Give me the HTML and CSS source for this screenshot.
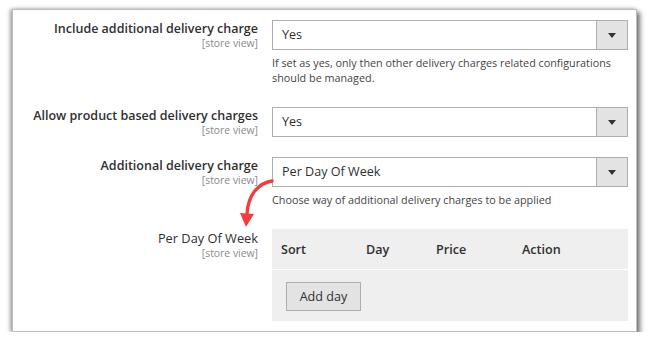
FILE: index.html
```html
<!DOCTYPE html>
<html lang="en">
<head>
    <meta charset="UTF-8">
    <title>Delivery Charges</title>
    <link rel="stylesheet" href="styles.css">
</head>
<body>
    <div class="card">
        <!-- Include additional delivery charge -->
        <div class="field">
            <div class="label">
                <span class="label-text">Include additional delivery charge</span>
                <span class="scope">[store view]</span>
            </div>
            <div class="control">
                <div class="select">
                    <span class="select-value">Yes</span>
                    <span class="select-btn"><i class="caret"></i></span>
                </div>
                <p class="note">If set as yes, only then other delivery charges related configurations should be managed.</p>
            </div>
        </div>

        <!-- Allow product based delivery charges -->
        <div class="field field-2">
            <div class="label">
                <span class="label-text">Allow product based delivery charges</span>
                <span class="scope">[store view]</span>
            </div>
            <div class="control">
                <div class="select">
                    <span class="select-value">Yes</span>
                    <span class="select-btn"><i class="caret"></i></span>
                </div>
            </div>
        </div>

        <!-- Additional delivery charge -->
        <div class="field field-3">
            <div class="label">
                <span class="label-text">Additional delivery charge</span>
                <span class="scope">[store view]</span>
            </div>
            <div class="control">
                <div class="select">
                    <span class="select-value">Per Day Of Week</span>
                    <span class="select-btn"><i class="caret"></i></span>
                </div>
                <p class="note">Choose way of additional delivery charges to be applied</p>
            </div>
        </div>

        <!-- Per Day Of Week table -->
        <div class="field field-4">
            <div class="label">
                <span class="label-text light">Per Day Of Week</span>
                <span class="scope">[store view]</span>
            </div>
            <div class="control">
                <div class="grid">
                    <div class="grid-head">
                        <span class="col col-sort">Sort</span>
                        <span class="col col-day">Day</span>
                        <span class="col col-price">Price</span>
                        <span class="col col-action">Action</span>
                    </div>
                    <div class="grid-body">
                        <button class="btn">Add day</button>
                    </div>
                </div>
            </div>
        </div>
    </div>

    <svg class="pointer" width="50" height="60" viewBox="0 0 50 60">
        <path d="M42 11 C29 13 18 24 17 44" fill="none" stroke="#f23d3f" stroke-width="3.4" stroke-linecap="round"/>
        <polygon points="10,43 24,44 16,57" fill="#f23d3f"/>
    </svg>
</body>
</html>
```

FILE: styles.css
```css
* {
    box-sizing: border-box;
}

body {
    margin: 0;
    background: #ffffff;
    font-family: 'Open Sans', sans-serif;
    color: #303030;
    position: relative;
}

.card {
    margin: 9px 0 0 12px;
    width: 625px;
    height: 323px;
    padding-top: 10px;
    background: #ffffff;
    border: 1px solid #bdbdbd;
    box-shadow: 3px 3px 5px rgba(0, 0, 0, 0.55), -2px 0 4px rgba(0, 0, 0, 0.35);
}

.field {
    display: grid;
    grid-template-columns: 245px 356px;
    column-gap: 14px;
}

.field-2 {
    margin-top: 22px;
}

.field-3 {
    margin-top: 20px;
}

.field-4 {
    margin-top: 22px;
}

.label {
    display: flex;
    flex-direction: column;
    align-items: flex-end;
    text-align: right;
    white-space: nowrap;
}

.label-text {
    font-size: 12.5px;
    font-weight: 600;
    line-height: 17px;
}

.label-text.light {
    font-weight: 400;
    font-size: 12.8px;
    margin-top: 1px;
}

.scope {
    font-size: 10.4px;
    line-height: 12px;
    color: #8a8a8a;
}

.select {
    display: flex;
    height: 30px;
    border: 1px solid #adadad;
    background: #ffffff;
}

.select-value {
    flex: 1;
    padding-left: 9px;
    font-size: 12.6px;
    line-height: 28px;
}

.select-btn {
    width: 31px;
    background: #e3e3e3;
    border-left: 1px solid #adadad;
    display: flex;
    align-items: center;
    justify-content: center;
}

.caret {
    width: 0;
    height: 0;
    border-left: 4px solid transparent;
    border-right: 4px solid transparent;
    border-top: 5px solid #333333;
}

.note {
    margin: 5px 0 0;
    font-size: 10.8px;
    line-height: 15px;
    color: #444444;
}

.grid {
    background: #efefef;
    height: 92px;
}

.grid-head {
    display: flex;
    height: 41px;
    align-items: center;
    padding-left: 9px;
    border-bottom: 1px solid #ffffff;
}

.col {
    font-size: 12.6px;
    font-weight: 600;
}

.col-sort { width: 85px; }
.col-day { width: 70px; }
.col-price { width: 86px; }

.grid-body {
    padding: 12px 0 0 14px;
}

.btn {
    width: 75px;
    height: 29px;
    padding: 0;
    background: #e3e3e3;
    border: 1px solid #adadad;
    font-family: 'Open Sans', sans-serif;
    font-size: 12.6px;
    color: #303030;
}

.pointer {
    position: absolute;
    left: 230px;
    top: 170px;
}
```
